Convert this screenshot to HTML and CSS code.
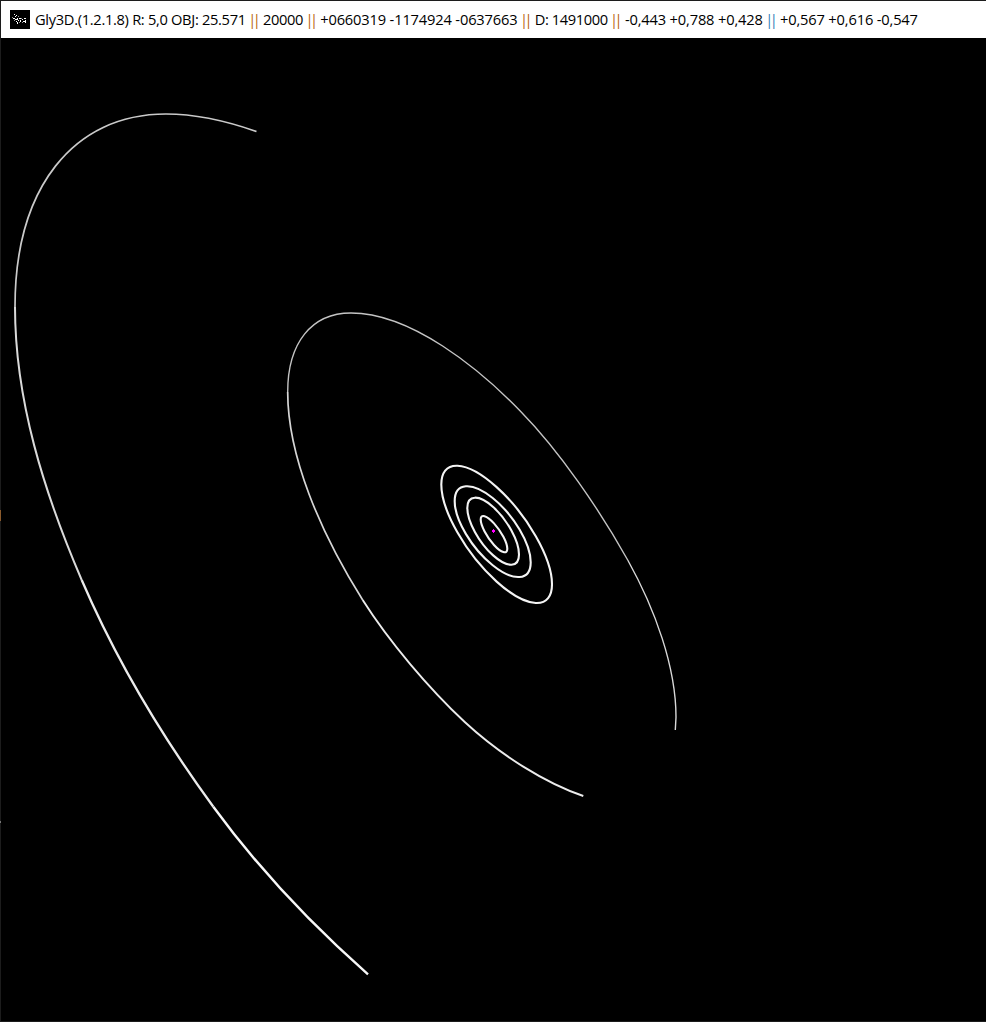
FILE: index.html
```html
<!DOCTYPE html>
<html lang="en">
<head>
<meta charset="utf-8">
<title>Gly3D</title>
<link rel="stylesheet" href="styles.css">
</head>
<body>
<div class="window">
  <header class="titlebar">
    <svg class="app-icon" viewBox="0 0 20 19" shape-rendering="crispEdges">
      <rect width="20" height="19" fill="#000"/>
      <path fill="#fff" d="M4 4h1v1h-1zM6 5h1v1h-1zM5 6h1v1h-1zM3 8h2v1h-2zM5 9h2v1h-2zM7 8h1v2h-1zM6 11h1v1h-1zM7 12h1v2h-1zM9 8h2v1h-2zM8 10h1v1h-1zM10 10h1v2h-1zM12 9h1v1h-1zM14 8h2v1h-2zM13 11h2v1h-2zM15 10h1v3h-1z"/>
      <path fill="#999" d="M2 7h1v1h-1zM8 6h1v1h-1zM4 10h1v1h-1zM9 12h1v1h-1zM12 12h1v1h-1zM11 8h1v1h-1z"/>
    </svg>
    <h1 class="title"><span class="name">Gly3D.(1.2.1.8) R: 5,0 OBJ: 25.571</span> <span class="bar">||</span> 20000 <span class="bar">||</span> <span class="coords">+0660319 -1174924 -0637663</span> <span class="bar">||</span> D: 1491000 <span class="bar">||</span> <span class="coords">-0,443 +0,788 +0,428</span> <span class="bar bar-cool">||</span> <span class="coords">+0,567 +0,616 -0,547</span></h1>
  </header>
  <svg class="space" viewBox="0 38 986 984">
    <g class="orbit">
      <path stroke="#cacaca" stroke-width="1.700" d="M256.500 131.500C228 121.500 196 114 166 114C73 114 15 188 15 307"/>
      <path stroke="#dadada" stroke-width="2" d="M15 307C15 400 43.900 492 81.700 580"/>
      <path stroke="#ececec" stroke-width="2.300" d="M81.700 580C114.400 656 157.700 730.700 213.300 806.700"/>
      <path stroke="#f8f8f8" stroke-width="2.400" d="M213.300 806.700C258 867.800 312 925 368 974.300"/>
    </g>
    <g class="orbit">
      <path stroke="#c4c4c4" stroke-width="1.400" d="M287.700 392C287.700 343 311.400 313 351 313C411 313 479 368.500 520 410.700C560 451.500 600 510.500 627.700 560"/>
      <path stroke="#d8d8d8" stroke-width="1.400" d="M627.700 560C655 609 676 667 676 717L675.300 730"/>
      <path stroke="#d6d6d6" stroke-width="1.700" d="M287.700 392C287.700 456 320 532 362.700 600"/>
      <path stroke="#ececec" stroke-width="1.900" d="M362.700 600C389.400 642 428.500 688 465 722.300C501 755.500 546 783.500 583.300 796"/>
    </g>
    <g class="orbit inner">
      <circle r="1" transform="matrix(55.35 49.8 0 47.25 496.65 534.35)"/>
      <circle r="1" transform="matrix(38 30.5 0 33.6 492.7 531.65)"/>
      <circle r="1" transform="matrix(25.85 23.2 0 24.2 493.15 531.2)"/>
      <circle r="1" transform="matrix(13.3 14.6 0 10.8 494 534.15)"/>
    </g>
    <path class="star" d="M493 529h1v1h1v2h-1v1h-1v-1h-1v-2h1z"/>
    <path class="edge" d="M0 38h1v984h-1zM0 1021h986v1h-986z"/>
    <path class="edge-mark" d="M0 510h1v11h-1z"/>
    <path class="edge-dot" d="M0 821h1v2h-1z"/>
  </svg>
</div>
</body>
</html>
```
FILE: styles.css
```css
body {
  margin: 0;
  background: #000;
}

.window {
  display: flex;
  flex-direction: column;
  width: 986px;
  height: 1022px;
  overflow: hidden;
}

.titlebar {
  display: flex;
  align-items: center;
  gap: 5px;
  box-sizing: border-box;
  height: 38px;
  padding-left: 9px;
  border-top: 1px solid #1c1c1c;
  border-left: 1px solid #1c1c1c;
  background: #fff;
}

.app-icon {
  flex: none;
  width: 20px;
  height: 19px;
}

.title {
  margin: 0;
  padding-bottom: 2px;
  color: #000;
  font: 400 14.67px/20px "Open Sans", "Noto Sans", sans-serif;
  letter-spacing: -0.4px;
  white-space: nowrap;
}

.name {
  letter-spacing: -0.31px;
}

.coords {
  letter-spacing: -0.16px;
}

.bar {
  margin: 0 2.3px 0 -1px;
  color: #b8660f;
  letter-spacing: -3.5px;
}

.bar-cool {
  color: #2f7fb8;
}

.space {
  display: block;
  width: 986px;
  height: 984px;
  background: #000;
}

.orbit {
  fill: none;
}

.inner {
  stroke: #f4f4f4;
  stroke-width: 2.1px;
}

.inner circle {
  vector-effect: non-scaling-stroke;
}

.star {
  fill: #f0f;
}

.edge {
  fill: #1c1c1c;
}

.edge-mark {
  fill: #8a5a2c;
}

.edge-dot {
  fill: #777;
}
```
